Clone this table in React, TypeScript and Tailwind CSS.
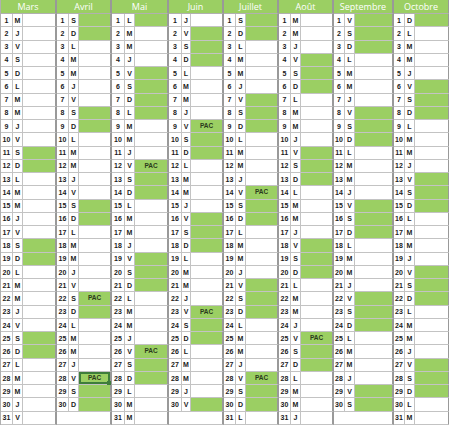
import React from "react"

type Month = {
  name: string
  m: number
  days: number
  green: number[]
  pac: number[]
}

const MONTHS: Month[] = [
  { name: "Mars", m: 2, days: 31, green: [11, 12, 18, 19, 25, 26], pac: [] },
  { name: "Avril", m: 3, days: 30, green: [1, 2, 8, 9, 15, 16, 23, 29, 30], pac: [22, 28] },
  { name: "Mai", m: 4, days: 31, green: [1, 5, 6, 7, 8, 13, 14, 19, 20, 21, 27, 28], pac: [12, 26] },
  { name: "Juin", m: 5, days: 30, green: [2, 3, 4, 10, 11, 16, 17, 18, 24, 25, 30], pac: [9, 23] },
  { name: "Juillet", m: 6, days: 31, green: [1, 2, 7, 8, 9, 15, 16, 21, 22, 23, 29, 30], pac: [14, 28] },
  { name: "Août", m: 7, days: 31, green: [4, 5, 6, 11, 12, 13, 18, 19, 20, 26, 27], pac: [25] },
  { name: "Septembre", m: 8, days: 30, green: [1, 2, 3, 8, 9, 10, 15, 16, 17, 22, 23, 24, 29, 30], pac: [] },
  { name: "Octobre", m: 9, days: 31, green: [1, 6, 7, 8, 13, 14, 15, 20, 21, 22, 27, 28, 29], pac: [] },
]

const LETTERS = ["D", "L", "M", "M", "J", "V", "S"]

const cellBase =
  "flex items-center justify-center border-b border-r border-[#c3c3c3] text-[7px] font-bold leading-none text-[#1a1a1a]"

export default function App() {
  const cells: React.ReactNode[] = []

  MONTHS.forEach((mo) => {
    cells.push(
      <div
        key={`h-${mo.name}`}
        className="col-span-3 flex items-center justify-center border-b border-r-2 border-b-[#b0b0b0] border-r-[#999999] bg-[#9bcf63] text-[9px] text-white"
        style={{ fontFamily: '"Open Sans", sans-serif' }}
      >
        {mo.name}
      </div>
    )
  })

  for (let d = 1; d <= 31; d++) {
    MONTHS.forEach((mo) => {
      if (d > mo.days) {
        cells.push(
          <div
            key={`${mo.name}-${d}`}
            className="col-span-3 border-b border-r-2 border-b-[#c3c3c3] border-r-[#999999] bg-white"
          />
        )
        return
      }
      const letter = LETTERS[new Date(2017, mo.m, d).getDay()]
      const isPac = mo.pac.includes(d)
      const isGreen = isPac || mo.green.includes(d)
      const selected = mo.name === "Avril" && d === 28
      cells.push(
        <div key={`${mo.name}-${d}-n`} className={`${cellBase} bg-white`}>
          {d}
        </div>,
        <div key={`${mo.name}-${d}-l`} className={`${cellBase} bg-white`}>
          {letter}
        </div>,
        <div
          key={`${mo.name}-${d}-c`}
          className={`relative flex items-center justify-center border-b border-r-2 border-b-[#c3c3c3] border-r-[#999999] text-[6.5px] font-bold leading-none text-[#2b3a1c] ${
            isGreen ? "bg-[#9bcf63]" : "bg-white"
          }`}
        >
          {selected && (
            <div className="pointer-events-none absolute inset-0 border-2 border-[#3e7d3b]">
              <div className="absolute -bottom-[3px] -right-[3px] h-[4px] w-[4px] bg-[#3e7d3b]" />
            </div>
          )}
          {isPac ? "PAC" : ""}
        </div>
      )
    })
  }

  return (
    <div className="h-[425px] w-[449px] overflow-hidden bg-white" style={{ fontFamily: '"Liberation Sans", Arial, sans-serif' }}>
      <div className="grid h-[425px] w-[449px] grid-cols-[12px_10px_34px_12px_10px_33px_13px_10px_34px_13px_9px_33px_12px_10px_33px_12px_10px_33px_11px_10px_39px_11px_10px_35px] grid-rows-[14px_repeat(31,minmax(0,1fr))] border-l border-[#b0b0b0]">
        {cells}
      </div>
    </div>
  )
}
